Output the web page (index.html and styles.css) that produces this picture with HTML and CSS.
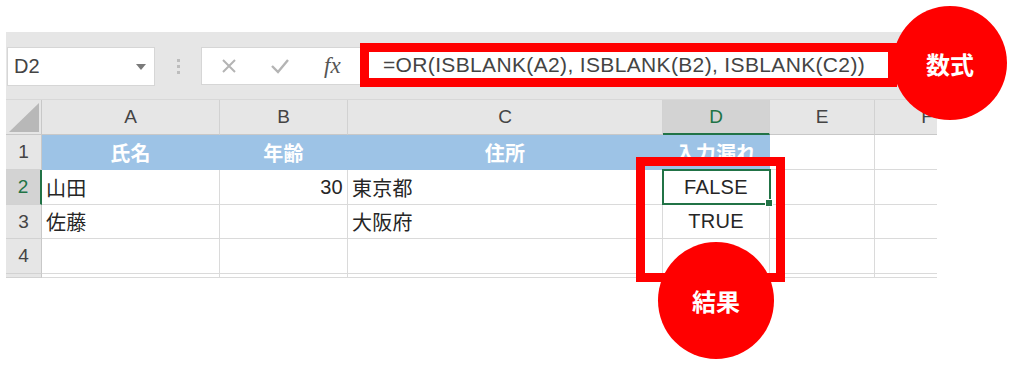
FILE: index.html
```html
<!DOCTYPE html>
<html lang="ja">
<head>
    <meta charset="UTF-8">
    <title>ISBLANK OR</title>
    <link rel="stylesheet" href="styles.css">
</head>
<body>

<div class="page">
    <div class="sheet">
        <div class="toolbar">
            <div class="name-box">
                <span>D2</span>
                <span class="caret"></span>
            </div>
            <div class="grip"><i></i><i></i><i></i></div>
            <div class="fx-buttons">
                <svg class="btn" width="18" height="18" viewBox="0 0 18 18">
                    <path d="M3 3 L15 15 M15 3 L3 15" stroke="#b4b4b4" stroke-width="2" fill="none"/>
                </svg>
                <svg class="btn" width="20" height="18" viewBox="0 0 20 18">
                    <path d="M2 9 L8 15 L18 3" stroke="#b4b4b4" stroke-width="2.4" fill="none"/>
                </svg>
                <span class="fx">fx</span>
            </div>
            <div class="formula">=OR(ISBLANK(A2), ISBLANK(B2), ISBLANK(C2))</div>
        </div>

        <div class="grid">
            <div class="corner"><span class="tri"></span></div>
            <div class="col-head">A</div>
            <div class="col-head">B</div>
            <div class="col-head">C</div>
            <div class="col-head active">D</div>
            <div class="col-head">E</div>
            <div class="col-head">F</div>

            <div class="row-head">1</div>
            <div class="cell title">氏名</div>
            <div class="cell title">年齢</div>
            <div class="cell title">住所</div>
            <div class="cell title">入力漏れ</div>
            <div class="cell"></div>
            <div class="cell"></div>

            <div class="row-head active">2</div>
            <div class="cell">山田</div>
            <div class="cell num">30</div>
            <div class="cell">東京都</div>
            <div class="cell center selected">FALSE</div>
            <div class="cell"></div>
            <div class="cell"></div>

            <div class="row-head">3</div>
            <div class="cell">佐藤</div>
            <div class="cell num"></div>
            <div class="cell">大阪府</div>
            <div class="cell center">TRUE</div>
            <div class="cell"></div>
            <div class="cell"></div>

            <div class="row-head">4</div>
            <div class="cell"></div>
            <div class="cell"></div>
            <div class="cell"></div>
            <div class="cell"></div>
            <div class="cell"></div>
            <div class="cell"></div>

            <div class="row-head"></div>
            <div class="cell"></div>
            <div class="cell"></div>
            <div class="cell"></div>
            <div class="cell"></div>
            <div class="cell"></div>
            <div class="cell"></div>
        </div>
    </div>

    <!-- annotations -->
    <div class="mark-result"></div>
    <div class="badge badge-formula">数式</div>
    <div class="badge badge-result">結果</div>
</div>

</body>
</html>
```

FILE: styles.css
```css
body {
    margin: 0;
    padding: 0;
    background-color: #fff;
    font-family: "Liberation Sans", "Noto Sans CJK JP", sans-serif;
    color: #333;
}
.page {
    position: relative;
    width: 1024px;
    height: 383px;
    overflow: hidden;
}
.sheet {
    width: 931px;
    margin: 32px 0 0 6px;
    overflow: hidden;
    background-color: #e6e6e6;
}
.toolbar {
    display: flex;
    align-items: flex-start;
    height: 68px;
    padding-left: 1px;
    box-sizing: border-box;
    border-bottom: 1px solid #d8d8d8;
}
.name-box {
    display: flex;
    align-items: center;
    justify-content: space-between;
    width: 148px;
    height: 39px;
    margin-top: 15px;
    padding: 0 8px 0 6px;
    box-sizing: border-box;
    background-color: #fff;
    border: 1px solid #d6d6d6;
    font-size: 20px;
    color: #444;
}
.caret {
    width: 0;
    height: 0;
    border-left: 5px solid transparent;
    border-right: 5px solid transparent;
    border-top: 6px solid #7a7a7a;
}
.grip {
    display: flex;
    flex-direction: column;
    align-items: center;
    justify-content: center;
    gap: 3px;
    width: 46px;
    height: 68px;
}
.grip i {
    display: block;
    width: 3px;
    height: 3px;
    background-color: #bdbdbd;
}
.fx-buttons {
    display: flex;
    align-items: center;
    width: 159px;
    height: 38px;
    margin-top: 15px;
    box-sizing: border-box;
    background-color: #fff;
    border: 1px solid #d6d6d6;
    border-right: none;
}
.fx-buttons .btn:first-child {
    margin-left: 18px;
}
.fx-buttons .btn + .btn {
    margin-left: 32px;
}
.fx {
    margin-left: 34px;
    font-family: "Liberation Serif", serif;
    font-style: italic;
    font-size: 23px;
    color: #555;
}
.formula {
    width: 537px;
    height: 44px;
    margin-top: 11px;
    padding-left: 14px;
    box-sizing: border-box;
    border: 9px solid #ff0000;
    background-color: #fff;
    font-size: 21px;
    line-height: 26px;
    letter-spacing: 0.35px;
    color: #444;
    white-space: nowrap;
    overflow: hidden;
}

.grid {
    display: grid;
    grid-template-columns: 36px 178px 128px 315px 107px 105px 105px;
    grid-template-rows: 35px 35px 35px 34px 35px 4px;
    width: 974px;
    background-color: #fff;
}
.corner,
.col-head,
.row-head {
    display: flex;
    align-items: center;
    justify-content: center;
    box-sizing: border-box;
    background-color: #e6e6e6;
    font-size: 19px;
    color: #444;
}
.corner {
    position: relative;
    border-right: 1px solid #c8c8c8;
    border-bottom: 1px solid #c8c8c8;
}
.tri {
    position: absolute;
    right: 2px;
    bottom: 2px;
    width: 0;
    height: 0;
    border-left: 30px solid transparent;
    border-bottom: 29px solid #b8b8b8;
}
.col-head {
    border-right: 1px solid #d2d2d2;
    border-bottom: 1px solid #c8c8c8;
}
.col-head.active {
    background-color: #d3d3d3;
    color: #217346;
    border-bottom: 2px solid #217346;
}
.row-head {
    border-right: 1px solid #c8c8c8;
    border-bottom: 1px solid #d2d2d2;
}
.row-head.active {
    background-color: #d3d3d3;
    color: #217346;
    border-right: 2px solid #217346;
}
.cell {
    display: flex;
    align-items: center;
    padding: 0 4px;
    box-sizing: border-box;
    border-right: 1px solid #dadada;
    border-bottom: 1px solid #dadada;
    font-size: 20px;
    letter-spacing: 0.3px;
    color: #262626;
    white-space: nowrap;
}
.cell.title {
    justify-content: center;
    background-color: #9dc3e6;
    border-color: #9dc3e6;
    color: #fff;
    font-weight: bold;
}
.cell.num {
    justify-content: flex-end;
}
.cell.center {
    justify-content: center;
}
.cell.selected {
    position: relative;
}
.cell.selected::after {
    content: "";
    position: absolute;
    left: -1px;
    top: -1px;
    right: -2px;
    bottom: -1px;
    border: 2px solid #217346;
}
.cell.selected::before {
    content: "";
    position: absolute;
    right: -4px;
    bottom: -3px;
    width: 6px;
    height: 6px;
    background-color: #217346;
    border: 1px solid #fff;
    z-index: 1;
}

.mark-result {
    position: absolute;
    left: 636px;
    top: 157px;
    width: 149px;
    height: 125px;
    box-sizing: border-box;
    border: 9px solid #ff0000;
}
.badge {
    position: absolute;
    display: flex;
    align-items: center;
    justify-content: center;
    border-radius: 50%;
    background-color: #ff0000;
    color: #fff;
    font-family: "Noto Sans CJK JP", sans-serif;
    font-weight: bold;
    font-size: 24px;
}
.badge-formula {
    left: 893px;
    top: 6px;
    width: 114px;
    height: 114px;
}
.badge-result {
    left: 658px;
    top: 242px;
    width: 116px;
    height: 117px;
}
```
